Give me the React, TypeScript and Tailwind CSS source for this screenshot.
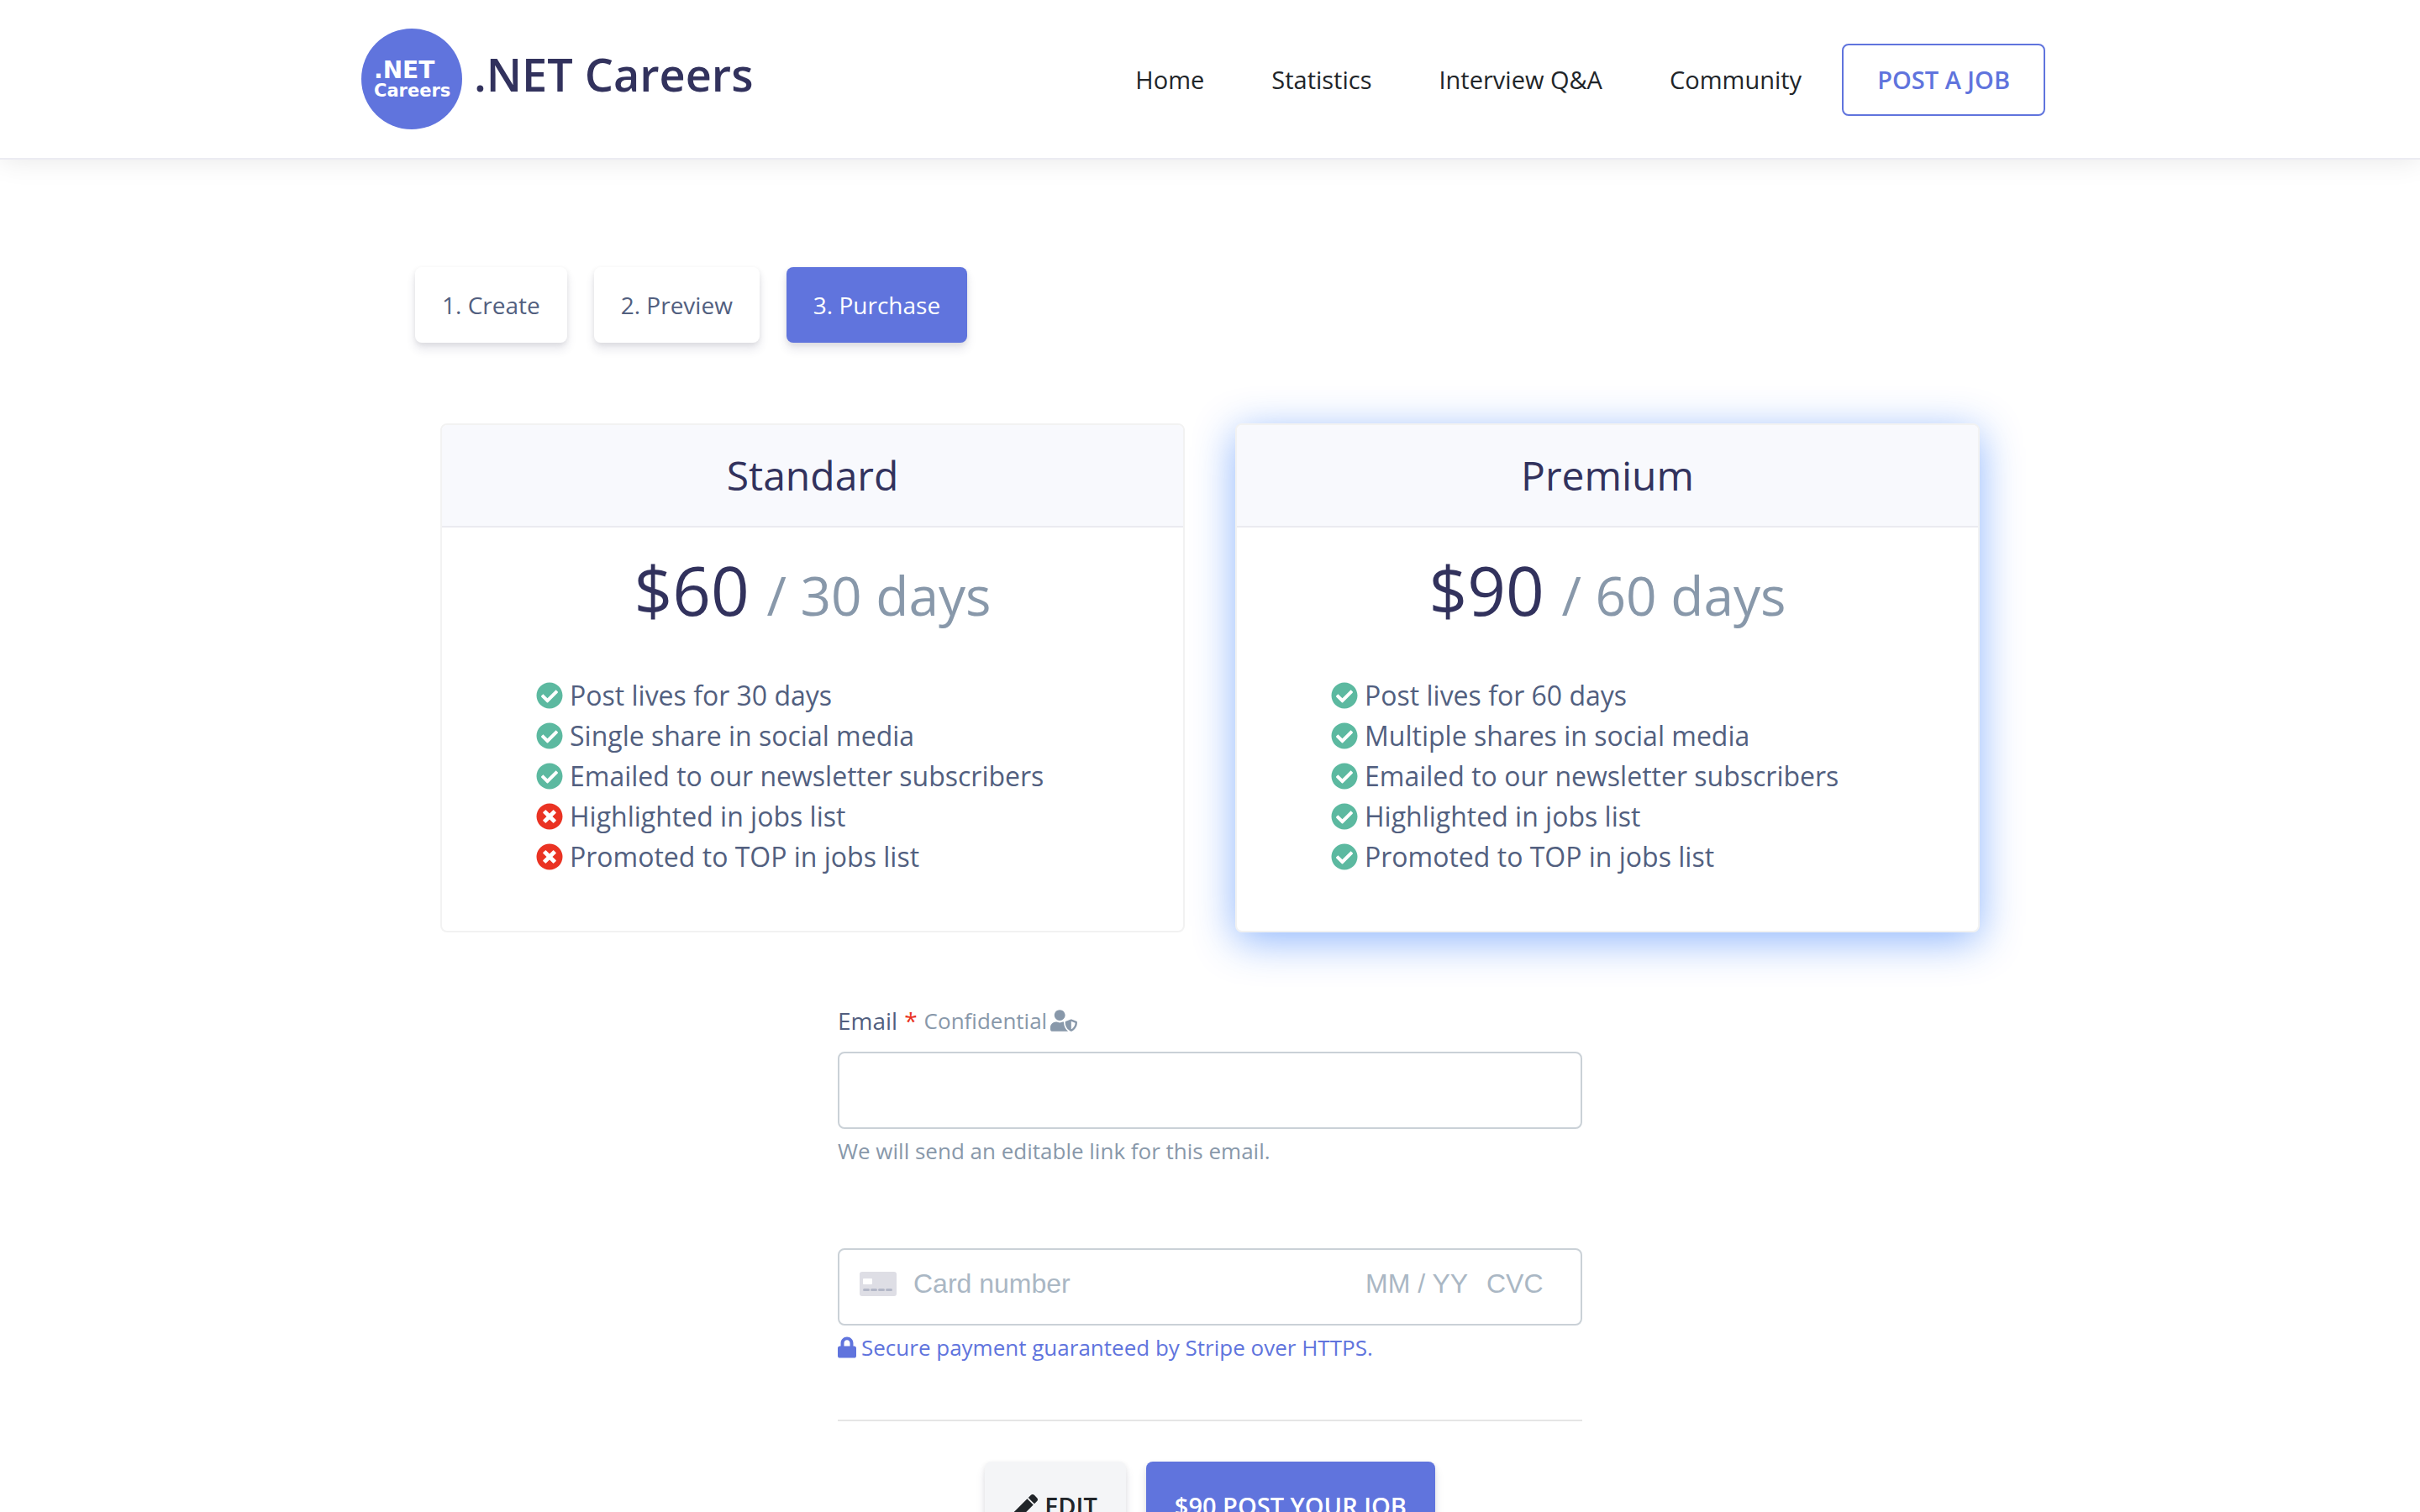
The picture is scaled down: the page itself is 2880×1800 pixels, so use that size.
import React, { useState, ChangeEvent } from 'react'
import { FaCheckCircle, FaTimesCircle, FaUserShield, FaLock, FaPen } from 'react-icons/fa'

const navLinks = ['Home', 'Statistics', 'Interview Q&A', 'Community']

const steps = ['1. Create', '2. Preview', '3. Purchase']

const plans = [
    {
        name: 'Standard',
        price: '$60',
        period: '/ 30 days',
        featured: false,
        features: [
            { text: 'Post lives for 30 days', included: true },
            { text: 'Single share in social media', included: true },
            { text: 'Emailed to our newsletter subscribers', included: true },
            { text: 'Highlighted in jobs list', included: false },
            { text: 'Promoted to TOP in jobs list', included: false },
        ],
    },
    {
        name: 'Premium',
        price: '$90',
        period: '/ 60 days',
        featured: true,
        features: [
            { text: 'Post lives for 60 days', included: true },
            { text: 'Multiple shares in social media', included: true },
            { text: 'Emailed to our newsletter subscribers', included: true },
            { text: 'Highlighted in jobs list', included: true },
            { text: 'Promoted to TOP in jobs list', included: true },
        ],
    },
]

const Logo = () => (
    <svg viewBox="0 0 120 120" className="size-[120px] shrink-0" aria-hidden="true">
        <circle cx="60" cy="60" r="60" fill="#6074dd" />
        <text x="15" y="59" fill="#fff" fontFamily="'DejaVu Sans', sans-serif" fontWeight="700" fontSize="28">.NET</text>
        <text x="15" y="81" fill="#fff" fontFamily="'DejaVu Sans', sans-serif" fontWeight="700" fontSize="21">Careers</text>
    </svg>
)

const CardIcon = () => (
    <svg viewBox="0 0 44 29" className="w-11 shrink-0" aria-hidden="true">
        <rect width="44" height="29" rx="3" fill="#dedee5" />
        <rect x="4" y="8" width="11" height="7" rx="1" fill="#fff" />
        <rect x="4" y="20" width="8" height="3" rx="1.5" fill="#b3b7c7" />
        <rect x="13" y="20" width="8" height="3" rx="1.5" fill="#b3b7c7" />
        <rect x="22" y="20" width="8" height="3" rx="1.5" fill="#b3b7c7" />
        <rect x="31" y="20" width="8" height="3" rx="1.5" fill="#b3b7c7" />
    </svg>
)

const Header = () => (
    <header className="border-b-2 border-[#ebebf2] shadow-[0_0_32px_rgba(0,0,0,0.1)]">
        <div className="mx-auto flex h-[188px] max-w-[2020px] items-center justify-between pr-4">
            <a href="#" className="flex items-center gap-3.5 text-[54px] font-semibold text-[#32325d]">
                <Logo />
                <span className="pb-3">.NET Careers</span>
            </a>
            <nav className="flex items-center gap-12 pt-0.5">
                <ul className="flex gap-20 text-[29px] text-[#212529]">
                    {navLinks.map((link) => (
                        <li key={link}><a href="#">{link}</a></li>
                    ))}
                </ul>
                <a href="#" className="rounded-lg border-2 border-[#6074dd] px-10 py-5 text-[29px] leading-[42px] font-semibold text-[#6074dd]">
                    POST A JOB
                </a>
            </nav>
        </div>
    </header>
)

const App = () => {
    const [formData, setFormData] = useState({ email: '', card: '', expiry: '', cvc: '' })

    const handleChange = (e: ChangeEvent<HTMLInputElement>) => {
        setFormData({
            ...formData,
            [e.target.name]: e.target.value
        })
    }

    return (
        <div className="bg-white font-['Open_Sans',sans-serif] text-[#525f7f]">
            <Header />

            <main className="mx-auto max-w-[1892px] pt-32 pb-20">
                <ol className="flex gap-8">
                    {steps.map((step, i) => (
                        <li key={step}>
                            <a
                                href="#"
                                className={
                                    'block rounded-lg px-8 py-6 text-[28px] leading-[42px] shadow-[0_8px_12px_rgba(50,50,93,0.11),0_2px_6px_rgba(0,0,0,0.08)] ' +
                                    (i === 2 ? 'bg-[#6074dd] text-white' : 'bg-white')
                                }
                            >
                                {step}
                            </a>
                        </li>
                    ))}
                </ol>

                <div className="mt-24 grid grid-cols-2 gap-[60px] px-[30px]">
                    {plans.map((plan) => (
                        <section
                            key={plan.name}
                            className={
                                'overflow-hidden rounded-lg border-2 border-[#f2f2f2] bg-white ' +
                                (plan.featured ? 'shadow-[0_10px_50px_rgba(0,90,250,0.45)]' : '')
                            }
                        >
                            <h2 className="border-b-2 border-[#ebebf0] bg-[#f8f9fd] py-6 text-center text-5xl leading-[72px] text-[#32325d]">
                                {plan.name}
                            </h2>
                            <p className="pt-6 text-center text-[80px] leading-[100px] text-[#32325d]">
                                {plan.price} <small className="text-[64px] leading-none text-[#8898aa]">{plan.period}</small>
                            </p>
                            <ul className="pt-13 pb-16 pl-28 text-[32px] leading-[48px]">
                                {plan.features.map((feature) => (
                                    <li key={feature.text} className="flex items-center gap-2">
                                        {feature.included
                                            ? <FaCheckCircle className="text-[#5cb9a0]" />
                                            : <FaTimesCircle className="text-[#ea3323]" />}
                                        {feature.text}
                                    </li>
                                ))}
                            </ul>
                        </section>
                    ))}
                </div>

                <form className="mx-auto mt-20 max-w-[886px]" onSubmit={(e) => e.preventDefault()}>
                    <label htmlFor="email" className="flex items-center gap-2 text-[28px] leading-[50px]">
                        Email <span className="text-[#ea3323]">*</span>
                        <small className="flex items-center gap-1 text-[26px] text-[#8898aa]">
                            Confidential <FaUserShield className="w-8" />
                        </small>
                    </label>
                    <input
                        id="email"
                        type="email"
                        name="email"
                        value={formData.email}
                        onChange={handleChange}
                        className="mt-3 block h-[92px] w-full rounded-lg border-2 border-[#cad1d7] px-6 text-[28px]"
                    />
                    <p className="mt-1.5 text-[26px] leading-[40px] text-[#8898aa]">We will send an editable link for this email.</p>

                    <div className="mt-24 flex h-[92px] items-center rounded-lg border-2 border-[#cad1d7] pr-11 pb-2 pl-6 font-['Liberation_Sans',sans-serif] text-[32px]">
                        <CardIcon />
                        <input
                            type="text"
                            name="card"
                            aria-label="Card number"
                            placeholder="Card number"
                            value={formData.card}
                            onChange={handleChange}
                            className="ml-5 min-w-0 flex-1 placeholder:text-[#aab7c4]"
                        />
                        <input
                            type="text"
                            name="expiry"
                            aria-label="Expiry date"
                            placeholder="MM / YY"
                            value={formData.expiry}
                            onChange={handleChange}
                            className="w-36 placeholder:text-[#aab7c4]"
                        />
                        <input
                            type="text"
                            name="cvc"
                            aria-label="CVC"
                            placeholder="CVC"
                            value={formData.cvc}
                            onChange={handleChange}
                            className="w-[68px] placeholder:text-[#aab7c4]"
                        />
                    </div>
                    <p className="mt-1.5 flex items-center gap-1.5 text-[26px] leading-[40px] text-[#6074dd]">
                        <FaLock className="w-[22px]" />
                        Secure payment guaranteed by Stripe over HTTPS.
                    </p>

                    <hr className="mt-[66px] border-t-2 border-[#e5e5e5]" />

                    <div className="mt-12 flex justify-center gap-6">
                        <button
                            type="button"
                            className="flex items-center gap-2 rounded-lg bg-[#f4f5f7] px-[34px] py-8 text-[29px] leading-[42px] font-semibold text-[#212529] shadow-[0_8px_12px_rgba(50,50,93,0.11),0_2px_6px_rgba(0,0,0,0.08)]"
                        >
                            <FaPen />
                            EDIT
                        </button>
                        <button
                            type="submit"
                            className="rounded-lg bg-[#6074dd] px-[34px] py-8 text-[29px] leading-[42px] font-semibold text-white shadow-[0_8px_12px_rgba(50,50,93,0.11),0_2px_6px_rgba(0,0,0,0.08)]"
                        >
                            $90 POST YOUR JOB
                        </button>
                    </div>
                </form>
            </main>
        </div>
    )
}

export default App
